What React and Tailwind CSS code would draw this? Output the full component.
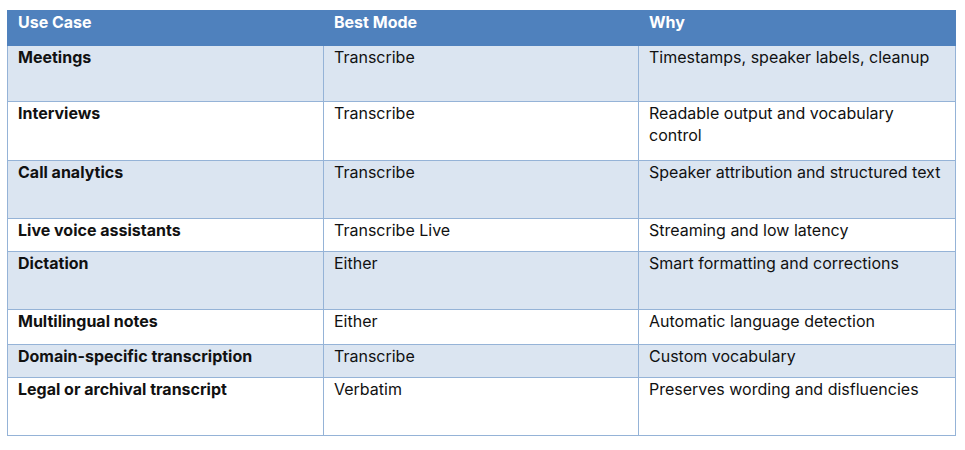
const rows = [
  { use: "Meetings", mode: "Transcribe", why: "Timestamps, speaker labels, cleanup", h: "h-[56px]" },
  { use: "Interviews", mode: "Transcribe", why: "Readable output and vocabulary control", h: "h-[59px]" },
  { use: "Call analytics", mode: "Transcribe", why: "Speaker attribution and structured text", h: "h-[58px]" },
  { use: "Live voice assistants", mode: "Transcribe Live", why: "Streaming and low latency", h: "h-[33px]" },
  { use: "Dictation", mode: "Either", why: "Smart formatting and corrections", h: "h-[58px]" },
  { use: "Multilingual notes", mode: "Either", why: "Automatic language detection", h: "h-[35px]" },
  { use: "Domain-specific transcription", mode: "Transcribe", why: "Custom vocabulary", h: "h-[33px]" },
  { use: "Legal or archival transcript", mode: "Verbatim", why: "Preserves wording and disfluencies", h: "h-[58px]" },
];

export default function App() {
  return (
    <div className="min-h-[450px] bg-white pl-[7px] pt-[10px] font-['Inter','Liberation_Sans',sans-serif] text-[16px] leading-[22px] text-[#111]">
      <table className="w-[948px] table-fixed border-collapse">
        <colgroup>
          <col className="w-[316px]" />
          <col className="w-[315px]" />
          <col className="w-[317px]" />
        </colgroup>
        <thead>
          {/* Header */}
          <tr className="h-[35px] bg-[#4f81bd] text-white">
            <th className="px-[10px] pb-[9px] text-left align-top font-bold border border-[#4f81bd]">Use Case</th>
            <th className="px-[10px] pb-[9px] text-left align-top font-bold border border-[#4f81bd]">Best Mode</th>
            <th className="px-[10px] pb-[9px] text-left align-top font-bold border border-[#4f81bd]">Why</th>
          </tr>
        </thead>
        <tbody>
          {rows.map((r, i) => (
            <tr key={r.use} className={`${r.h} ${i % 2 === 0 ? "bg-[#dbe5f1]" : "bg-white"}`}>
              <td className="border border-[#95b3d7] px-[10px] align-top font-bold">{r.use}</td>
              <td className="border border-[#95b3d7] px-[10px] align-top">{r.mode}</td>
              <td className="border border-[#95b3d7] px-[10px] align-top">{r.why}</td>
            </tr>
          ))}
        </tbody>
      </table>
    </div>
  );
}
